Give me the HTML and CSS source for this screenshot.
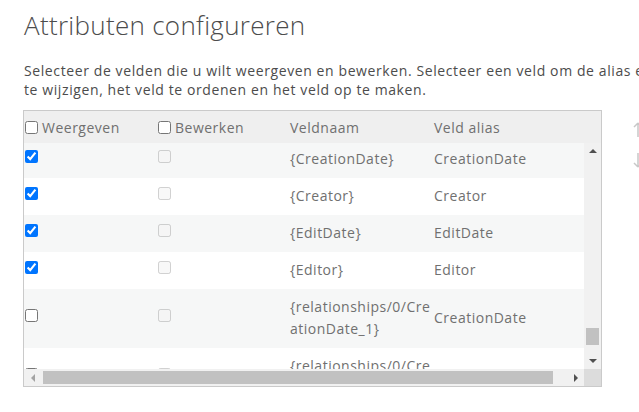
FILE: index.html
```html
<!DOCTYPE html>
<html>
<head>
<meta charset="utf-8">
<link rel="stylesheet" href="styles.css">
</head>
<body>
<div class="page">
  <h1 class="title">Attributen configureren</h1>
  <p class="desc">Selecteer de velden die u wilt weergeven en bewerken. Selecteer een veld om de alias en<br>te wijzigen, het veld te ordenen en het veld op te maken.</p>
  <div class="workspace">
    <div class="grid">
      <div class="head">
        <label class="hcell c1"><input type="checkbox" class="cb">Weergeven</label>
        <label class="hcell c2"><input type="checkbox" class="cb">Bewerken</label>
        <div class="hcell c3">Veldnaam</div>
        <div class="hcell c4">Veld alias</div>
      </div>
      <div class="body">
        <div class="viewport">
          <div class="rows">
            <div class="row alt">
              <div class="cell c1"><input type="checkbox" class="cb" checked></div>
              <div class="cell c2"><input type="checkbox" class="cb" disabled></div>
              <div class="cell c3 txt">{CreationDate}</div>
              <div class="cell c4 txt">CreationDate</div>
            </div>
            <div class="row">
              <div class="cell c1"><input type="checkbox" class="cb" checked></div>
              <div class="cell c2"><input type="checkbox" class="cb" disabled></div>
              <div class="cell c3 txt">{Creator}</div>
              <div class="cell c4 txt">Creator</div>
            </div>
            <div class="row alt">
              <div class="cell c1"><input type="checkbox" class="cb" checked></div>
              <div class="cell c2"><input type="checkbox" class="cb" disabled></div>
              <div class="cell c3 txt">{EditDate}</div>
              <div class="cell c4 txt">EditDate</div>
            </div>
            <div class="row">
              <div class="cell c1"><input type="checkbox" class="cb" checked></div>
              <div class="cell c2"><input type="checkbox" class="cb" disabled></div>
              <div class="cell c3 txt">{Editor}</div>
              <div class="cell c4 txt">Editor</div>
            </div>
            <div class="row alt">
              <div class="cell c1"><input type="checkbox" class="cb"></div>
              <div class="cell c2"><input type="checkbox" class="cb" disabled></div>
              <div class="cell c3 txt">{relationships/0/CreationDate_1}</div>
              <div class="cell c4 txt">CreationDate</div>
            </div>
            <div class="row">
              <div class="cell c1"><input type="checkbox" class="cb"></div>
              <div class="cell c2"><input type="checkbox" class="cb" disabled></div>
              <div class="cell c3 txt">{relationships/0/CreationDate_2}</div>
              <div class="cell c4 txt">CreationDate</div>
            </div>
          </div>
        </div>
        <div class="vscroll">
          <span class="arr up"></span>
          <span class="vtrack"><span class="vthumb"></span></span>
          <span class="arr down"></span>
        </div>
      </div>
      <div class="hbar">
        <div class="hscroll">
          <span class="arr left"></span>
          <span class="hthumb"></span>
          <span class="arr right"></span>
        </div>
        <div class="corner"></div>
      </div>
    </div>
    <div class="tools">
      <svg class="tool" width="12" height="16" viewBox="0 0 12 16"><path d="M6 1 L2 5 M6 1 L10 5 M6 1 V15" fill="none" stroke="#c8c8c8" stroke-width="1.5"/></svg>
      <svg class="tool" width="12" height="16" viewBox="0 0 12 16"><path d="M6 15 L2 11 M6 15 L10 11 M6 15 V1" fill="none" stroke="#c8c8c8" stroke-width="1.5"/></svg>
    </div>
  </div>
</div>
</body>
</html>
```
FILE: styles.css
```css
html, body {
  margin: 0;
  padding: 0;
  background: #ffffff;
  overflow: hidden;
}
body {
  font-family: "Open Sans", "Liberation Sans", sans-serif;
  color: #4c4c4c;
}
.page {
  padding: 0 0 0 23px;
  width: 700px;
}
.title {
  margin: 0;
  padding: 8px 0 0 1px;
  font-size: 26px;
  font-weight: 300;
  letter-spacing: 0.3px;
  line-height: 34px;
  color: #4c4c4c;
}
.desc {
  margin: 19px 0 0 1px;
  font-size: 14px;
  letter-spacing: 0.6px;
  line-height: 19px;
  white-space: nowrap;
  color: #4c4c4c;
}
.workspace {
  display: flex;
  align-items: flex-start;
  gap: 30px;
  margin-top: 11px;
}
.grid {
  width: 577px;
  border: 1px solid #cacaca;
  display: flex;
  flex-direction: column;
  color: #707070;
  font-size: 14px;
  letter-spacing: 0.5px;
}
.head {
  display: flex;
  height: 32px;
  align-items: center;
  background: #efefef;
}
.hcell {
  display: flex;
  align-items: center;
}
.c1 { width: 133px; flex: none; }
.c2 { width: 133px; flex: none; }
.c3 { width: 144px; flex: none; }
.c4 { flex: 1; }
.cb {
  width: 13px;
  height: 13px;
  margin: 0 4px 0 1px;
  flex: none;
}
.body {
  display: flex;
  height: 226px;
}
.viewport {
  width: 560px;
  overflow: hidden;
}
.rows {
  margin-top: -2px;
}
.row {
  display: flex;
  align-items: center;
  background: #ffffff;
}
.row.alt {
  background: #f6f7f7;
}
.cell {
  display: flex;
  align-items: center;
  padding: 7px 0 8px;
  line-height: 22px;
}
.cell .cb {
  margin-bottom: 6px;
  margin-top: 0;
}
.txt {
  display: block;
  word-break: break-all;
}
.c3.txt {
  padding-right: 2px;
  width: 142px;
}
.vscroll {
  width: 17px;
  background: #f1f1f1;
  display: flex;
  flex-direction: column;
  align-items: center;
}
.vtrack {
  flex: 1;
  align-self: stretch;
  display: flex;
  flex-direction: column;
  justify-content: flex-end;
  align-items: center;
  padding-bottom: 14px;
}
.vthumb {
  width: 13px;
  height: 17px;
  background: #c1c1c1;
}
.arr {
  width: 0;
  height: 0;
  border: 4px solid transparent;
  flex: none;
}
.arr.up {
  border-bottom: 4px solid #505050;
  border-top-width: 0;
  margin: 6px 0 0;
}
.arr.down {
  border-top: 4px solid #505050;
  border-bottom-width: 0;
  margin: 0 0 6px;
}
.hbar {
  display: flex;
  height: 17px;
}
.hscroll {
  width: 560px;
  background: #f1f1f1;
  display: flex;
  align-items: center;
}
.arr.left {
  border-right: 4px solid #a3a3a3;
  border-left-width: 0;
  margin: 0 8px 0 7px;
}
.arr.right {
  border-left: 4px solid #505050;
  border-right-width: 0;
  margin: 0 0 0 21px;
}
.hthumb {
  width: 510px;
  height: 13px;
  background: #c1c1c1;
}
.corner {
  width: 17px;
  background: #dcdcdc;
}
.tools {
  display: flex;
  flex-direction: column;
  gap: 14px;
  padding-top: 12px;
}
.tool {
  display: block;
}
```
